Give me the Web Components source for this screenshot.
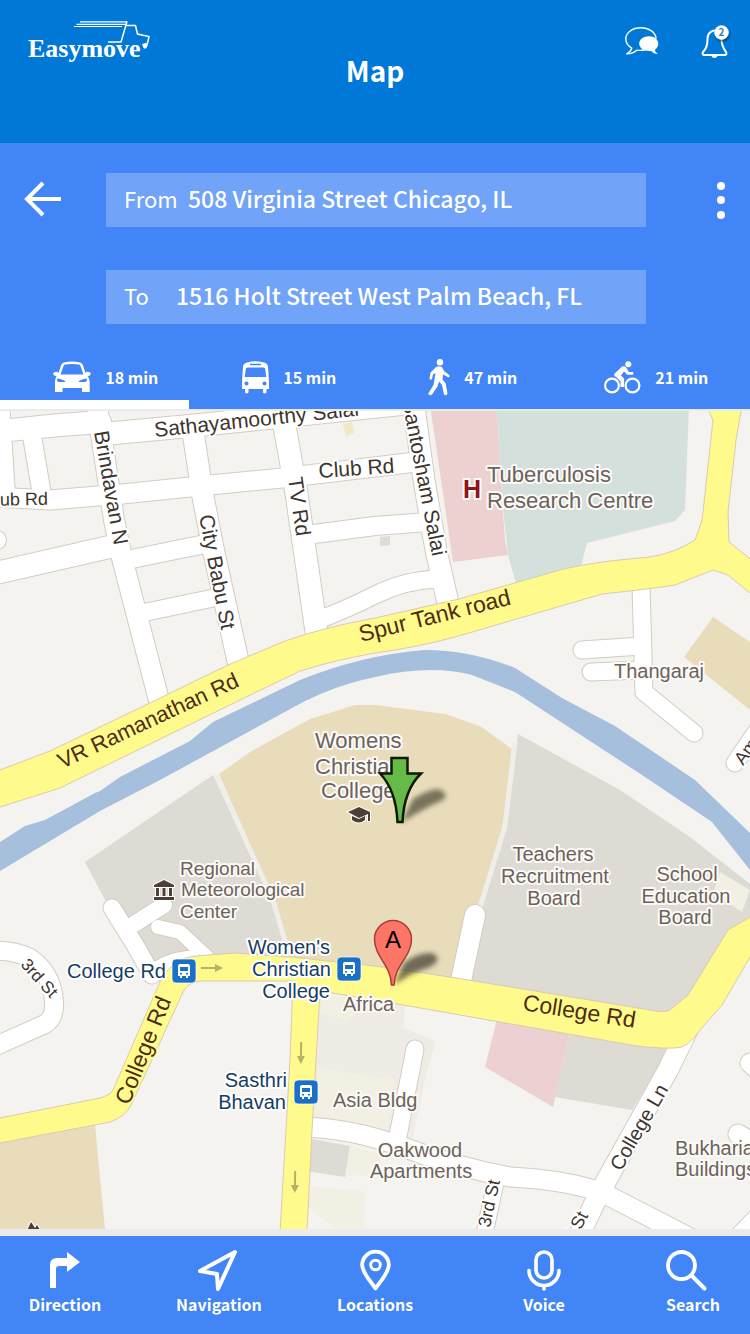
<!DOCTYPE html>
<html lang="en">
<head>
<meta charset="utf-8">
<meta name="viewport" content="width=device-width, initial-scale=1">
<title>Easymove – Map</title>
<style>
  html, body { margin: 0; padding: 0; }
  body { font-family: "Noto Sans CJK SC", "Noto Sans", sans-serif; color: #fff; background: #ebebeb; }
</style>
</head>
<body>
<move-app></move-app>

<script>
const define = (tag, html, setup) => {
  const template = document.createElement('template');
  template.innerHTML = html;
  customElements.define(tag, class extends HTMLElement {
    constructor() {
      super();
      this.attachShadow({ mode: 'open' }).append(template.content.cloneNode(true));
    }
    connectedCallback() { if (setup) setup(this, this.shadowRoot); }
  });
};

/* ---------- icons: [width, height, markup] ---------- */
const line = 'fill="none" stroke="#fff" stroke-linecap="round" stroke-linejoin="round"';
const icons = {
  back: [38, 36, `<path ${line} style="stroke-linecap:butt;stroke-linejoin:miter" stroke-width="4" d="M19 1L3 17l16 16M3 17h34"/>`],
  more: [8, 38, `<g fill="#fff"><circle cx="4" cy="5" r="4"/><circle cx="4" cy="19" r="4"/><circle cx="4" cy="34" r="4"/></g>`],
  chat: [34, 28, `<path ${line} stroke-width="1.4" d="M31 11C30 5 24 .8 16 .8 7.500 .8 .8 5.500 .8 12c0 4 2.500 7 6 9-.5 2.500-2 4-5 5.800 4.500 0 7.500-1.300 9.700-3.600 3 .3 5 .2 8-.2"/><path fill="#fff" d="M24 9.200c5.300 0 9.300 3.200 9.300 7.400 0 2.800-1.300 4.800-3.400 6.100.2 1.600 1.200 2.800 3.100 4.200-3 0-5.300-1-6.800-2.900-6.800.7-12-2.400-12-7.400 0-4.200 4.200-7.400 9.800-7.400z"/>`],
  bell: [21, 36, `<defs><filter id="s" x="-50%" y="-50%" width="200%" height="200%"><feDropShadow dx="1" dy="2" stdDeviation="1.300" flood-color="#04305c" flood-opacity=".7"/></filter></defs><path ${line} stroke-width="2" d="M13 5.500C9 6.500 6.500 10 6.500 14c0 7-1.500 9.500-4.500 13-.9 1.500-.4 3 1.500 3h20c2 0 2.400-1.500 1.500-3-2.500-3.500-4.500-6-4.500-13"/><path fill="#fff" d="M10.500 30h6a3 3 0 0 1-6 0z"/><circle cx="20.500" cy="7.500" r="7.200" fill="#fff" filter="url(#s)"/><text x="20.500" y="11" font-size="10" font-weight="700" text-anchor="middle" fill="#3a7bbd">2</text>`],
  car: [38, 32, `<path fill="#fff" fill-rule="evenodd" d="M11 1.500Q19-.5 27 1.500q2 .5 3 3L32.500 12l1-1.300q4.500 0 4.200 2.300-.2 2-3 2 2 3 2 6v10H29v-4H9.500v4H2V21q0-3 1.500-6-3 0-3.300-2Q0 10.700 4.500 10.700l1 1.300L8 4.500q1-2.500 3-3zM12 3.500q-1 .4-1.700 2L7.500 13.500h23L27.700 5.500q-.7-1.600-1.700-2-7-1-14 0zM4 17.500q-.3 2.500 1.500 3.500h7q-1-2.500-8.500-3.500zM34 17.500q-7.500 1-8.500 3.500h7q1.800-1 1.500-3.500z"/>`],
  bus: [27, 33, `<path fill="#fff" fill-rule="evenodd" d="M5 1.500Q13.500-.8 22 1.500q3.500.8 4 4L27 21v7h-2.500v3.500q-1.800 1.800-3.500 0V28H6.500v3.500q-1.800 1.800-3.500 0V28H0V21L1 5.500q.5-3.200 4-4zM8 2.800v1.400h11V2.800zM5.500 6.500Q4 6.500 3.800 8L2.700 16h21.600L23.200 8Q23 6.500 21.500 6.500zM4.500 20.500a2 2 0 1 0 .01 0zM22.500 20.500a2 2 0 1 0 .01 0z"/>`],
  walk: [22, 37, `<circle cx="12" cy="3.200" r="3.200" fill="#fff"/><path fill="#fff" d="M8 8q3-1.500 6 0l2 4 5.300 4q.9 1.200-.5 2.500L15 15.500l-.5 5L17.500 24l2 10.500q-.5 2.500-3.500 1.200L14 26l-3-3.500-1.500 5-5.500 8q-2.200 1.700-3.800-.7L5.500 26l2-12L5 15.500 4 20q-1.500 1-2.500 0L2.500 13.500z"/>`],
  bike: [37, 33, `<g ${line} stroke-width="2.200"><circle cx="8" cy="24.500" r="6.900"/><circle cx="28.500" cy="24.500" r="6.900"/></g><circle cx="24.300" cy="3.300" r="3" fill="#fff"/><path ${line} stroke-width="3.600" style="stroke-linecap:butt" d="M18.300 26v-6.500l-4.500-4.200"/><path fill="#fff" d="M10.800 12.500L18 5.500q2-1 4 .8l2.800 4.700h4.400v2.700h-6L20 10.500l-3 4 3.500 3.500-2 2-8-5q-1-1.300.3-2.500z"/>`],
  direction: [32, 37, `<path fill="#fff" d="M1 36V13Q1 6 8 6h10V0l13 10-13 10v-6H10q-3 0-3 3v19z"/>`],
  navigation: [42, 42, `<path ${line} stroke-width="4" d="M37 3L2 22l17 3 1 15z"/>`],
  locations: [31, 41, `<path ${line} stroke-width="3.800" d="M15.500 38.500C11 31.500 2.200 23 2.200 15a13.300 13.300 0 0 1 26.600 0c0 8-8.800 16.500-13.300 23.500z"/><circle cx="15.500" cy="15" r="4.800" ${line} stroke-width="3"/>`],
  voice: [34, 41, `<g ${line} stroke-width="3.600"><rect x="9" y="2" width="16" height="26" rx="8"/><path d="M2 20.500a15 15 0 0 0 30 0M17 35.500V39"/></g>`],
  search: [41, 41, `<circle cx="15.500" cy="15.500" r="13.500" ${line} stroke-width="3.800"/><path ${line} stroke-width="4" d="M25.500 25.500L38.500 38.500"/>`]
};
define('ui-icon', `<style>:host{display:block;flex:none}svg{display:block;overflow:visible}</style>`, (el, root) => {
  const [w, h, art] = icons[el.getAttribute('name')];
  root.innerHTML += `<svg width="${w}" height="${h}" viewBox="0 0 ${w} ${h}" aria-hidden="true">${art}</svg>`;
});
const addIcon = (el, holder) => {
  const icon = document.createElement('ui-icon');
  icon.setAttribute('name', el.getAttribute('icon'));
  holder.prepend(icon);
};

/* ---------- header ---------- */
define('app-logo', `
<style>:host{display:block}a{display:block;color:inherit}svg{display:block}</style>
<a href="#home" aria-label="Easymove">
<svg width="124" height="46" viewBox="0 0 124 46">
  <g fill="none" stroke="#fff">
    <path stroke-width="1.200" d="M52 1.800h47M48.500 4.300H98M46 6.500h48"/>
    <path stroke-width="1.500" d="M99 1.500L93 22H80M98.500 5.500h9l2 8.500 11.500 2.500-2 9"/>
  </g>
  <path fill="#fff" d="M114 24l4.500-1.200 1.500 1.200-1.500 4q-2 1.200-3 0z"/>
  <text x="0" y="37" fill="#fff" font-family="Liberation Serif, serif" font-weight="700" font-size="26">Easymove</text>
</svg></a>`);

define('app-header', `
<style>
  :host{display:grid;grid-template-columns:1fr auto 1fr;background:#0078d7;box-sizing:border-box;height:143px;padding:20px 28px 0}
  h1{margin:0;padding-top:28px;font-size:28px;line-height:44px;font-weight:700}
  nav{display:flex;justify-content:flex-end;align-items:flex-start;gap:42px;padding-top:5px}
  button{all:unset;cursor:pointer;display:block}
  .chat{padding-top:2px}
</style>
<app-logo></app-logo>
<h1>Map</h1>
<nav>
  <button class="chat" aria-label="Messages"><ui-icon name="chat"></ui-icon></button>
  <button aria-label="Notifications"><ui-icon name="bell"></ui-icon></button>
</nav>`);

/* ---------- route form ---------- */
define('route-field', `
<style>
  :host{display:flex;align-items:center;min-width:0;height:54px;box-sizing:border-box;padding:0 0 5px 18px;background:rgba(255,255,255,.25)}
  label{flex:none;width:var(--label-width);font-size:22px;line-height:32px;color:#fff}
  input{flex:1;width:0;min-width:0;border:0;padding:0;margin:0;background:none;outline:0;color:#fff;font:500 23px/34px "Noto Sans CJK SC","Noto Sans",sans-serif;height:48px}
</style>
<label for="place"></label><input id="place" type="text">`, (el, root) => {
  root.querySelector('label').textContent = el.getAttribute('label');
  root.querySelector('input').setAttribute('value', el.getAttribute('value'));
});

define('travel-mode', `
<style>
  :host{display:block}
  button{all:unset;cursor:pointer;display:flex;align-items:center;justify-content:center;gap:14px;width:100%;height:40px;font-weight:600;font-size:16px;line-height:24px}
</style>
<button role="tab"><span><slot></slot></span></button>`, (el, root) => addIcon(el, root.querySelector('button')));

define('route-panel', `
<style>
  :host{display:block;background:#4285f6;padding-top:30px}
  form{display:grid;grid-template-columns:82px minmax(0,1fr) 79px;row-gap:43px;align-items:center;padding:0 25px 0 24px}
  .to{grid-column:2}
  .from{--label-width:64px}
  .to{--label-width:52px}
  button{all:unset;cursor:pointer;display:block}
  .more{justify-self:end}
  .modes{display:grid;grid-template-columns:repeat(4,1fr);padding:33px 2px 3px 14px}
  .track{height:9px}
  .bar{width:25.2%;height:100%;background:#fff}
</style>
<form>
  <button type="button" aria-label="Back"><ui-icon name="back"></ui-icon></button>
  <route-field class="from" label="From" value="508 Virginia Street Chicago, IL"></route-field>
  <button type="button" class="more" aria-label="More"><ui-icon name="more"></ui-icon></button>
  <route-field class="to" label="To" value="1516 Holt Street West Palm Beach, FL"></route-field>
</form>
<div class="modes" role="tablist">
  <travel-mode icon="car">18 min</travel-mode>
  <travel-mode icon="bus">15 min</travel-mode>
  <travel-mode icon="walk">47 min</travel-mode>
  <travel-mode icon="bike">21 min</travel-mode>
</div>
<div class="track"><div class="bar"></div></div>`);

/* ---------- map ---------- */
const areas = [
  ['#ecd1d0', '430,405 497,405 502,500 505,540 508,555 453,562'],
  ['#d4e0dc', '497,405 689,405 685,510 675,521 587,543 580,570 517,587 508,555 502,500'],
  ['#e8dcba', '713,617 750,642 760,718 684,657'],
  ['#dedad4', '213,775 85,862 105,900 150,965 290,960 285,940 272,900'],
  ['#e8dcba', '219,774 250,752 310,719 355,705 375,705 445,714 480,726 512,749 503,825 490,870 478,905 450,985 290,965 285,940 272,895'],
  ['#dedad4', '518,734 620,790 690,837 750,884 750,925 680,1025 460,985 480,910 500,850 507,825'],
  ['#f2f0e2', '720,872 750,890 742,912 713,893'],
  ['#ecd0d2', '498,1015 570,1030 553,1107 485,1067'],
  ['#dedad4', '570,1030 668,1042 662,1060 632,1110 555,1097'],
  ['#efebe5', '318,995 405,1005 403,1028 436,1041 426,1075 412,1140 312,1120'],
  ['#f2f0e2', '318,1068 395,1080 388,1130 313,1120'],
  ['#f2f0e2', '322,995 375,1000 346,1020 320,1013'],
  ['#dedad4', '306,1138 350,1146 345,1177 306,1171'],
  ['#f2f0e2', '350,1146 382,1154 378,1176 346,1175'],
  ['#f2f0e2', '306,1186 366,1192 364,1232 340,1232 308,1207'],
  ['#e8dcba', '-60,1144 95,1125 106,1240 -60,1240'],
  ['#dedad4', '380,537 390,536 390,545 380,546'],
  ['#f1e8c4', '343,424 352,422 354,433 346,436']
];
const streets = [
  [22, 'M-40 435L60 425L100 422'], [22, 'M104 434L200 425L420 402'], [18, 'M0 400L6 495'], [18, 'M31 430L42 495'],
  [19, 'M-40 495L50 500L122 494L200 486L282 478L375 467L415 462'], [22, 'M-40 581L0 572L118 545'], [18, 'M122 561L205 544'],
  [17, 'M142 613L218 597'], [20, 'M96 400L102 440L114 520L122 558L162 712'], [21, 'M193 432L203 497L214 553L240 670'],
  [22, 'M282 412L296 490L318 642'], [18, 'M306 535L375 526L428 522'], [17, 'M318 620Q345 610 375 595T438 579'],
  [21, 'M413 400L424 480L436 550L450 612'],
  [17, 'M641 585L644 692L694 733'], [17, 'M582 650L641 646'], [17, 'M591 672L641 670'], [17, 'M735 763L765 719'],
  [17, 'M112 908L135 945L152 975'], [16, 'M128 928L164 905'], [14, 'M158 927L180 932L210 960'], [14, 'M150 975Q165 958 200 957'],
  [18, 'M-40 955Q5 945 30 958Q52 973 54 1002Q55 1018 45 1024L-40 1062'],
  [20, 'M475 915L459 990'],
  [17, 'M415 1049L398 1136'],
  [19, 'M300 1127Q350 1128 400 1146Q455 1167 510 1177Q570 1180 605 1194L700 1243'],
  [20, 'M690 1025L668 1070L600 1192L572 1250'], [16, 'M496 1180L481 1250'],
  [19, 'M750 1063L780 1090'], [19, 'M738 1134L780 1160'], [60, 'M755 1250L800 1203'], [18, 'M-5 540L-3 540']
];
const river = 'M-40 866L0 842L25 826L45 820L95 793L100 791L120 777L190 741L213 722L300 680Q362 655 425 650Q470 650 515 668L562 698L615 726L695 780L750 833L790 875V925L750 870L712 822L642 775L515 692L472 675Q430 664 375 677Q340 684 305 701L160 780L100 811L0 871L-40 895z';
const highways = [
  'M-40 786L0 770L50 751L150 703L228 665L285 641Q325 627 375 618L459 599L560 570Q590 562 650 557Q675 553 695 540Q703 520 703 512L713 420L704 400H743L736 440L728 512L729 542L790 591V622L750 593L728 575L713 570L675 585Q650 589 602 594L462 635Q420 647 375 653Q335 660 300 671L240 700L60 788L0 807L-40 820z',
  'M-40 1125L0 1118L100 1098Q110 1095 113 1090L160 982Q172 958 195 956L235 953L290 957L375 966L450 977L650 1010Q665 1013 670 1010L688 995L728 930L750 917L790 900V900L750 957L722 1005L700 1030Q687 1049 675 1048Q650 1049 620 1043L500 1022L375 1000L320 991L312 1130L306 1250H279L290 1060L293 981H200Q190 982 184 990L132 1103Q127 1116 110 1122L0 1143L-40 1150z'
];
/* text, x, y, size, angle, kind, anchor */
const labels = [
  ['Sathayamoorthy Salai', 155, 437, 21, -6, 'road'], ['Brindavan N', 94, 432, 21, 80, 'road'], ['City Babu St', 199, 516, 21, 79, 'road'],
  ['TV Rd', 288, 478, 21, 82, 'road'], ['Club Rd', 319, 478, 21, -4, 'road'], ['Club Rd', -17, 506, 18, -1, 'road'],
  ['Santosham Salai', 402, 401, 21, 79, 'road'], ['VR Ramanathan Rd', 62, 769, 22, -25, 'high'], ['Spur Tank road', 361, 642, 23, -14, 'high'],
  ['College Rd', 129, 1106, 23, -68, 'high'], ['College Rd', 522, 1010, 23, 9, 'high'], ['College Ln', 621, 1172, 20, -60, 'road'],
  ['3rd St', 20, 965, 17, 48, 'road'], ['3rd St', 490, 1228, 18, -78, 'road'], ['3rd St', 566, 1258, 18, -62, 'road'], ['Ams', 743, 766, 18, -54, 'road'],
  ['Tuberculosis', 487, 482, 22, 0, 'place'], ['Research Centre', 487, 508, 22, 0, 'place'],
  ['Thangaraj', 614, 678, 20, 0, 'place'],
  ['Womens', 315, 748, 22, 0, 'place'], ['Christian', 315, 774, 22, 0, 'place'], ['College', 321, 798, 22, 0, 'place'],
  ['Regional', 180, 875, 19, 0, 'place'], ['Meteorological', 181, 896, 19, 0, 'place'], ['Center', 180, 918, 19, 0, 'place'],
  ['Teachers', 553, 861, 20, 0, 'place', 'middle'], ['Recruitment', 555, 883, 20, 0, 'place', 'middle'], ['Board', 554, 905, 20, 0, 'place', 'middle'],
  ['School', 687, 881, 20, 0, 'place', 'middle'], ['Education', 686, 903, 20, 0, 'place', 'middle'], ['Board', 685, 924, 20, 0, 'place', 'middle'],
  ['College Rd', 166, 978, 20, 0, 'stop', 'end'],
  ["Women's", 330, 954, 20, 0, 'stop', 'end'], ['Christian', 331, 976, 20, 0, 'stop', 'end'], ['College', 330, 998, 20, 0, 'stop', 'end'],
  ['Sasthri', 287, 1087, 20, 0, 'stop', 'end'], ['Bhavan', 286, 1109, 20, 0, 'stop', 'end'],
  ['Africa', 343, 1011, 20, 0, 'place'], ['Asia Bldg', 333, 1107, 20, 0, 'place'],
  ['Oakwood', 420, 1157, 20, 0, 'place', 'middle'], ['Apartments', 421, 1178, 20, 0, 'place', 'middle'],
  ['Bukharia', 675, 1155, 20, 0, 'place'], ['Buildings', 675, 1176, 20, 0, 'place']
];
const path = (d, w, c) => `<path d="${d}" stroke="${c}" stroke-width="${w}"/>`;
const stop = (x, y) => `<g transform="translate(${x} ${y})"><rect x="-12" y="-12" width="24" height="24" rx="4" fill="#1a70c6" stroke="#fff" stroke-opacity=".7"/><path fill="#fff" fill-rule="evenodd" d="M-4-7h8q2 0 2 2V5H4v2H2V5h-4v2h-2V5h-2V-5q0-2 2-2zM-4-4v4h8v-4zM-4 2v1.500h2V2zM2 2v1.500h2V2z"/></g>`;
const arrow = (x, y, a) => `<path transform="translate(${x} ${y}) rotate(${a})" fill="#b3b265" d="M-11-1H3v-3l8 4-8 4V1h-14z"/>`;

define('city-map', `
<style>
  :host{display:flex;flex:1;min-height:600px;overflow:hidden;background:#f4f3f0}
  svg{display:block;width:100%;height:auto;min-height:100%}
  text{font-family:"Liberation Sans",Arial,sans-serif;paint-order:stroke;stroke-linejoin:round;stroke-width:4px}
  .road{fill:#3d342e;stroke:#fff}
  .high{fill:#4b2d12;stroke:#fffa8c}
  .place{fill:#6d625b;stroke:#fbfaf8}
  .stop{fill:#163c66;stroke:#fff}
</style>
<svg viewBox="0 411 750 818" preserveAspectRatio="xMidYMid slice" role="img" aria-label="Street map">
  <defs><filter id="blur" x="-30%" y="-30%" width="160%" height="160%"><feGaussianBlur stdDeviation="2.500"/></filter></defs>
  ${areas.map(([c, p]) => `<polygon points="${p}" fill="${c}"/>`).join('')}
  <path d="M216 775L273 900L287 948M515 742L505 826L480 908" fill="none" stroke="#f0eeea" stroke-width="5"/>
  <path d="${river}" fill="#a5bfdd"/>
  <g fill="none" stroke-linecap="round" stroke-linejoin="round">
    ${streets.map(([w, d]) => path(d, w + 2, '#d3ccc3')).join('')}
    ${streets.map(([w, d]) => path(d, w, '#fff')).join('')}
  </g>
  <g fill="#fffa8c" stroke="#d9cbb0">${highways.map(d => `<path d="${d}"/>`).join('')}</g>
  ${arrow(212, 968, 0)}${arrow(301, 1053, 91)}${arrow(295, 1182, 91)}
  ${labels.map(([t, x, y, s, a, k, m]) => `<text class="${k}" font-size="${s}" text-anchor="${m || 'start'}" transform="translate(${x} ${y}) rotate(${a})">${t}</text>`).join('')}
  ${stop(184, 971)}${stop(349, 969)}${stop(306, 1092)}
  <text font-size="25" font-weight="700" x="463" y="498" style="fill:#8e1416;stroke:#fff">H</text>
  <g fill="#4d3f37" stroke="#fff" stroke-width="2" paint-order="stroke">
    <path d="M154 885l10-5 10 5v2h-20zM156 888h3v8h-3zM162.500 888h3v8h-3zM169 888h3v8h-3zM154 897h20v3h-20z"/>
    <path d="M348 812l11-5 11 5v9h-2v-7l-9 4zM352 816l7 3 6-3v4q-6 5-13 0z"/>
    <path d="M26 1233l5-11 4 6 2-3 5 8z"/>
  </g>
  <path d="M401 823L413 799Q430 789 438 789Q450 794 443 800Q422 809 401 823z" fill="#3e3a2c" opacity=".65" filter="url(#blur)"/>
  <path d="M391.500 758h16v15.500H421Q404 790 402.500 822h-5Q396 790 380 773.500h11.500z" fill="#66bb47" stroke="#101808" stroke-width="2.500"/>
  <path d="M394 985L404 963Q418 952 432 953Q444 959 430 967Q410 973 394 985z" fill="#3e3a2c" opacity=".7" filter="url(#blur)"/>
  <path d="M391.500 985C391 965 374.500 957 374.500 939a18.500 18.500 0 0 1 37 0C411.500 957 394.500 965 394 985z" fill="#fd7567" stroke="#a83a38" stroke-width="1.500"/>
  <text x="393" y="948" font-size="24" text-anchor="middle" fill="#000">A</text>
</svg>`);

/* ---------- bottom bar ---------- */
define('tab-link', `
<style>
  :host{display:flex;justify-content:center}
  a{display:flex;flex-direction:column;align-items:var(--art-align,center);color:#fff;text-decoration:none;font-weight:600;font-size:16px;line-height:24px}
  .art{display:grid;place-items:center;height:44px}
</style>
<a href="#"><span class="art"></span><span><slot></slot></span></a>`, (el, root) => addIcon(el, root.querySelector('.art')));

define('bottom-bar', `
<style>
  :host{display:block;background:#4285f6}
  nav{display:grid;grid-template-columns:130fr 178fr 134fr 204fr 94fr;box-sizing:border-box;height:98px;padding:12px 10px 0 0}
  .search{--art-align:flex-start}
</style>
<nav>
  <tab-link icon="direction">Direction</tab-link>
  <tab-link icon="navigation">Navigation</tab-link>
  <tab-link icon="locations">Locations</tab-link>
  <tab-link icon="voice">Voice</tab-link>
  <tab-link class="search" icon="search">Search</tab-link>
</nav>`);

define('move-app', `
<style>
  :host{display:flex;flex-direction:column;min-height:100vh}
  city-map{margin:2px 0 7px}
</style>
<app-header></app-header>
<route-panel></route-panel>
<city-map></city-map>
<bottom-bar></bottom-bar>`);
</script>
</body>
</html>
